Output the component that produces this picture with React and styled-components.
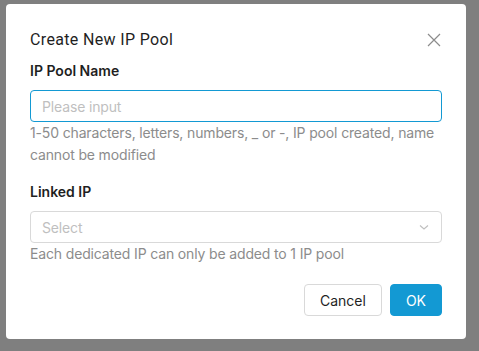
import React from "react";
import styled, { createGlobalStyle } from "styled-components";

const Global = createGlobalStyle`
  html, body { margin: 0; padding: 0; }
  body {
    background: #7f7f7f;
    font-family: Inter, "Noto Sans", sans-serif;
    width: 479px;
    height: 351px;
    overflow: hidden;
  }
`;

const Overlay = styled.div`
  padding: 4px 0 0 6px;
`;

const Modal = styled.div`
  width: 460px;
  height: 335px;
  box-sizing: border-box;
  background: #fff;
  border-radius: 4px;
  padding: 24px 24px 23px;
  display: flex;
  flex-direction: column;
`;

const Header = styled.div`
  display: flex;
  align-items: center;
  justify-content: space-between;
  height: 24px;
  margin-bottom: 8px;
`;

const Title = styled.div`
  font-family: Roboto, "Noto Sans", sans-serif;
  font-size: 16px;
  line-height: 24px;
  letter-spacing: 0.35px;
  color: #1f1f1f;
  font-weight: 400;
`;

const Close = styled.button`
  border: none;
  background: none;
  padding: 0;
  width: 16px;
  height: 16px;
  display: flex;
  align-items: center;
  justify-content: center;
  cursor: pointer;
`;

const Field = styled.div`
  display: flex;
  flex-direction: column;
  margin-bottom: ${(p) => p.$mb || 0}px;
`;

const Label = styled.div`
  font-size: 14px;
  line-height: 22px;
  font-weight: 600;
  color: #1f1f1f;
  margin-bottom: 8px;
`;

const Input = styled.input`
  box-sizing: border-box;
  width: 100%;
  height: 32px;
  border: 1px solid #1399d3;
  border-radius: 4px;
  padding: 0 11px;
  font-family: inherit;
  font-size: 14px;
  letter-spacing: -0.15px;
  color: #1f1f1f;
  outline: none;
  &::placeholder { color: #bfbfbf; }
`;

const Select = styled.div`
  box-sizing: border-box;
  height: 32px;
  border: 1px solid #d9d9d9;
  border-radius: 4px;
  padding: 0 11px;
  display: flex;
  align-items: center;
  justify-content: space-between;
  font-size: 14px;
  letter-spacing: -0.15px;
  color: #bfbfbf;
`;

const Help = styled.div`
  font-size: 14px;
  line-height: 22px;
  letter-spacing: -0.15px;
  color: #8c8c8c;
`;

const Footer = styled.div`
  margin-top: auto;
  display: flex;
  justify-content: flex-end;
  gap: 8px;
`;

const Button = styled.button`
  height: 32px;
  box-sizing: border-box;
  padding: 0 15px;
  border-radius: 4px;
  font-family: inherit;
  font-size: 14px;
  border: 1px solid ${(p) => (p.$primary ? "#1399d3" : "#d9d9d9")};
  background: ${(p) => (p.$primary ? "#1399d3" : "#fff")};
  color: ${(p) => (p.$primary ? "#fff" : "#1f1f1f")};
  cursor: pointer;
`;

export default function App() {
  return (
    <>
      <Global />
      <Overlay>
        <Modal>
          <Header>
            <Title>Create New IP Pool</Title>
            <Close aria-label="close">
              <svg width="14" height="14" viewBox="0 0 14 14">
                <path d="M1 1L13 13M13 1L1 13" stroke="#8c8c8c" strokeWidth="1.2" fill="none" />
              </svg>
            </Close>
          </Header>
          <Field $mb={15}>
            <Label>IP Pool Name</Label>
            <Input placeholder="Please input" />
            <Help>
              1-50 characters, letters, numbers, _ or -, IP pool created, name
              <br />
              cannot be modified
            </Help>
          </Field>
          <Field>
            <Label>Linked IP</Label>
            <Select>
              <span>Select</span>
              <svg width="12" height="12" viewBox="0 0 12 12">
                <path d="M2 4.5L6 8L10 4.5" stroke="#bfbfbf" strokeWidth="1.1" fill="none" />
              </svg>
            </Select>
            <Help>Each dedicated IP can only be added to 1 IP pool</Help>
          </Field>
          <Footer>
            <Button>Cancel</Button>
            <Button $primary>OK</Button>
          </Footer>
        </Modal>
      </Overlay>
    </>
  );
}
